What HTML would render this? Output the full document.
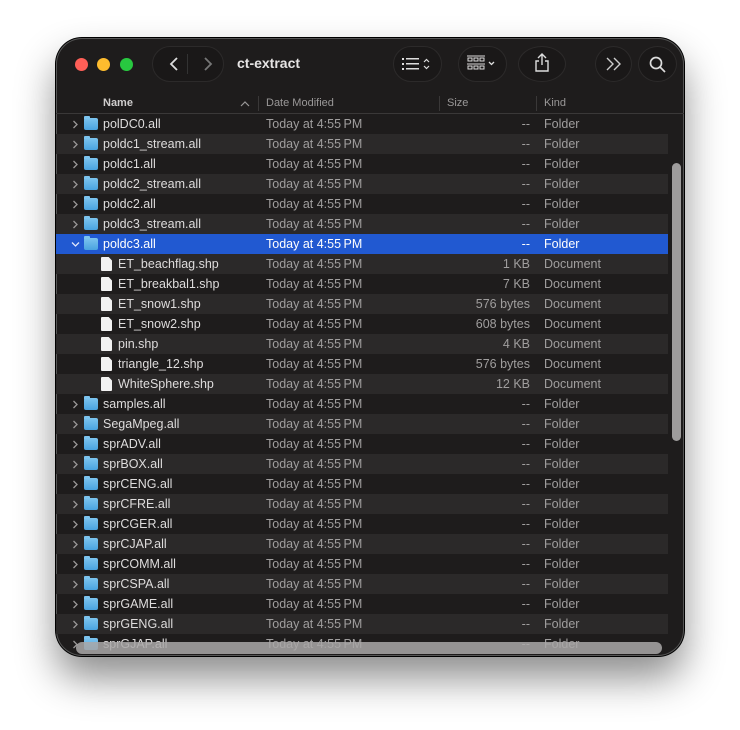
<!DOCTYPE html>
<html><head><meta charset="utf-8"><style>
*{margin:0;padding:0;box-sizing:border-box}
body{width:740px;height:730px;background:#fff;font-family:"Liberation Sans",sans-serif;position:relative;overflow:hidden}
.win{position:absolute;left:56px;top:38px;width:628px;height:618px;border-radius:26px;background:#1e1c1c;box-shadow:0 0 0 1px #000,0 22px 40px rgba(0,0,0,.45),inset 0 0 0 1px #555;overflow:hidden}
.a{position:absolute}
.tl{position:absolute;top:20px;width:13px;height:13px;border-radius:50%}
.pill{position:absolute;border-radius:20px;background:#1a1818;border:1px solid #2c2a2a}
.hdr{position:absolute;top:55px;left:0;right:0;height:21px;border-bottom:1px solid #3a3838;font-size:11px;color:#9a9898}
.sep{position:absolute;top:3px;width:1px;height:15px;background:#3a3838}
.row{position:absolute;left:0;width:612px;height:20px;font-size:12.5px;color:#dedcdc;white-space:nowrap}
.row span{position:absolute;top:3px}
.l{background:#2b2929}
.sel{background:#2159d1;color:#fff}
.d{color:#a09e9e}
.sel .d{color:#fff}
.fold{position:absolute;left:28px;top:4px;width:14px;height:12px;background:linear-gradient(#7cc4ef,#4aa3e0);border-radius:2px}
.fold:before{content:"";position:absolute;left:0;top:-2px;width:6px;height:3px;background:#7cc4ef;border-radius:1px 1px 0 0}
.doc{position:absolute;left:45px;top:3px;width:11px;height:14px;background:#f2f2f2;border-radius:1px;clip-path:polygon(0 0,70% 0,100% 25%,100% 100%,0 100%)}
.cv{position:absolute;left:15px;top:6px}
</style></head><body>
<div class="win">
<div class="tl" style="left:19px;background:#fe5f57"></div>
<div class="tl" style="left:41px;background:#febc2e"></div>
<div class="tl" style="left:64px;background:#28c840"></div>
<div class="pill" style="left:96px;top:8px;width:72px;height:36px"></div>
<div class="a" style="left:131px;top:16px;width:1px;height:20px;background:#333"></div>
<svg class="a" style="left:106px;top:16px" width="56" height="20"><path d="M15 4 L9 10 L15 16" stroke="#ddd" stroke-width="1.8" fill="none"/><path d="M43 4 L49 10 L43 16" stroke="#777" stroke-width="1.8" fill="none"/></svg>
<div class="a" style="left:181px;top:17px;font-size:14px;font-weight:bold;color:#e6e4e4">ct-extract</div>
<div class="pill" style="left:337px;top:8px;width:49px;height:36px"></div>
<svg class="a" style="left:346px;top:18px" width="32" height="16"><g fill="#ddd"><rect x="0" y="2" width="2" height="2"/><rect x="0" y="7" width="2" height="2"/><rect x="0" y="12" width="2" height="2"/><rect x="4" y="2" width="13" height="1.5"/><rect x="4" y="7" width="13" height="1.5"/><rect x="4" y="12" width="13" height="1.5"/></g><path d="M22 6 L24.5 3.5 L27 6 M22 10 L24.5 12.5 L27 10" stroke="#ddd" stroke-width="1.2" fill="none"/></svg>
<div class="pill" style="left:402px;top:8px;width:49px;height:36px"></div>
<svg class="a" style="left:411px;top:17px" width="32" height="18"><g stroke="#ddd" stroke-width="1" fill="none"><rect x="1" y="3" width="4" height="3"/><rect x="7" y="3" width="4" height="3"/><rect x="13" y="3" width="4" height="3"/><rect x="1" y="11" width="4" height="3"/><rect x="7" y="11" width="4" height="3"/><rect x="13" y="11" width="4" height="3"/><path d="M0 1H18M0 9H18"/><path d="M22 7 L24.5 9.5 L27 7" stroke-width="1.3"/></g></svg>
<div class="pill" style="left:462px;top:8px;width:48px;height:36px;border-radius:50%"></div>
<svg class="a" style="left:476px;top:14px" width="20" height="22"><g stroke="#ddd" stroke-width="1.4" fill="none"><path d="M10 2V13M6 6L10 2L14 6"/><path d="M7 9H4V19H16V9H13"/></g></svg>
<div class="pill" style="left:539px;top:8px;width:37px;height:36px;border-radius:50%"></div>
<svg class="a" style="left:548px;top:18px" width="20" height="16"><g stroke="#ccc" stroke-width="1.4" fill="none"><path d="M3 2L9 8L3 14M10 2L16 8L10 14"/></g></svg>
<div class="pill" style="left:582px;top:8px;width:39px;height:36px;border-radius:50%"></div>
<svg class="a" style="left:592px;top:17px" width="20" height="20"><g stroke="#ddd" stroke-width="1.7" fill="none"><circle cx="8" cy="8" r="5.5"/><path d="M12 12L17 17"/></g></svg>
<div class="hdr">
<span class="a" style="left:47px;top:4px;font-weight:bold;color:#cfcdcd">Name</span>
<svg class="a" style="left:184px;top:7px" width="10" height="8"><path d="M1 6L5 2L9 6" stroke="#9a9898" stroke-width="1.2" fill="none"/></svg>
<div class="sep" style="left:202px"></div>
<span class="a" style="left:210px;top:4px">Date Modified</span>
<div class="sep" style="left:383px"></div>
<span class="a" style="left:391px;top:4px">Size</span>
<div class="sep" style="left:480px"></div>
<span class="a" style="left:488px;top:4px">Kind</span>
</div>
<div id="rows"></div>
<div class="a" style="left:616px;top:125px;width:9px;height:278px;background:#9e9c9c;border-radius:5px"></div>
<div class="a" style="left:20px;top:604px;width:586px;height:12px;background:rgba(170,168,168,.85);border-radius:6px"></div>
</div>
<script>
var R=[["polDC0.all"],["poldc1_stream.all"],["poldc1.all"],["poldc2_stream.all"],["poldc2.all"],["poldc3_stream.all"],["poldc3.all","S"],
["ET_beachflag.shp","1 KB"],["ET_breakbal1.shp","7 KB"],["ET_snow1.shp","576 bytes"],["ET_snow2.shp","608 bytes"],["pin.shp","4 KB"],["triangle_12.shp","576 bytes"],["WhiteSphere.shp","12 KB"],
["samples.all"],["SegaMpeg.all"],["sprADV.all"],["sprBOX.all"],["sprCENG.all"],["sprCFRE.all"],["sprCGER.all"],["sprCJAP.all"],["sprCOMM.all"],["sprCSPA.all"],["sprGAME.all"],["sprGENG.all"],["sprGJAP.all"]];
var h="";
R.forEach(function(r,i){var doc=r[1]&&r[1]!="S";var cls="row"+(r[1]=="S"?" sel":(i%2?" l":""));
h+='<div class="'+cls+'" style="top:'+(76+i*20)+'px">';
if(doc){h+='<div class="doc"></div><span style="left:62px">'+r[0]+'</span>';}
else{var p=r[1]=="S"?'M1 2.5L4.5 6L8 2.5':'M2.5 1L6 4.5L2.5 8';h+='<svg class="cv" width="9" height="9"><path d="'+p+'" stroke="'+(r[1]=="S"?'#dfe6fa':'#9a9898')+'" stroke-width="1.3" fill="none"/></svg><div class="fold"></div><span style="left:47px">'+r[0]+'</span>';}
h+='<span class="d" style="left:210px">Today at 4:55\u2009PM</span>';
h+='<span class="d" style="right:138px">'+(doc?r[1]:'--')+'</span>';
h+='<span class="d" style="left:488px">'+(doc?'Document':'Folder')+'</span></div>';});
document.getElementById("rows").innerHTML=h;
</script>
</body></html>
